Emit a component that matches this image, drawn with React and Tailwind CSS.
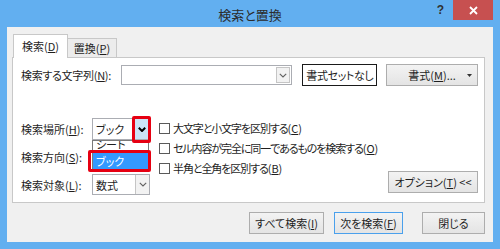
import React from "react";

const U = ({ c }) => <span className="underline underline-offset-[1px] decoration-[1px]">{c}</span>;

const Chevron = ({ bold }) => (
  <svg width="8" height="5" viewBox="0 0 8 5">
    <path
      d="M0.8 0.8 L4 4 L7.2 0.8"
      fill="none"
      stroke={bold ? "#000" : "#606060"}
      strokeWidth={bold ? 2 : 1.1}
    />
  </svg>
);

const Btn = ({ w, children, primary }) => (
  <div
    className={`h-[22px] flex items-center justify-center whitespace-nowrap border bg-linear-to-b from-[#f3f3f3] to-[#e4e4e4] ${
      primary ? "border-[#4aa0ec]" : "border-[#adadad]"
    } ${w}`}
  >
    {children}
  </div>
);

export default function App() {
  return (
    <div className="w-[500px] h-[249px] bg-[#62aff0] flex flex-col font-['Noto_Sans_CJK_JP',sans-serif] [font-feature-settings:'palt'] text-[11px] leading-[14px] text-[#1e1e1e] overflow-hidden">
      {/* title bar */}
      <div className="h-[27px] shrink-0 grid grid-cols-[1fr_auto_1fr]">
        <div />
        <div className="pt-[6px] text-[13px] leading-[17px] text-[#2b2b2b]">検索と置換</div>
        <div className="flex justify-end items-start pr-[7px]">
          <div className="mt-[3px] mr-[9px] text-[12px] leading-[14px] font-bold text-[#303030] font-['Liberation_Sans',sans-serif]">?</div>
          <div className="w-[40px] h-[20px] bg-[#c75050] flex items-center justify-center">
            <svg width="9" height="9" viewBox="0 0 9 9">
              <path d="M1 1 L8 8 M8 1 L1 8" stroke="#fff" strokeWidth="1.8" />
            </svg>
          </div>
        </div>
      </div>

      {/* body */}
      <div className="mx-[7px] mb-[7px] flex-1 bg-[#f0f0f0] flex flex-col pt-[7px] pl-[5px]">
        {/* tabs */}
        <div className="flex items-end h-[24px] ml-[1px] relative z-10">
          <div className="w-[55px] h-[24px] bg-white border border-b-0 border-[#c8c8c8] flex items-center justify-center pb-[1px]">
            検索(<U c="D" />)
          </div>
          <div className="w-[49px] h-[19px] mb-[1px] bg-[#ececec] border border-l-0 border-b-0 border-[#c8c8c8] flex items-center justify-center">
            置換(<U c="P" />)
          </div>
        </div>

        {/* panel */}
        <div className="w-[473px] h-[146px] -mt-[1px] border border-[#c8c8c8] bg-white flex flex-col pt-[6px] pl-[8px] pr-[6px]">
          {/* row 1 */}
          <div className="flex items-center h-[22px] whitespace-nowrap">
            <div className="w-[100px] tracking-[-0.3px]">
              検索する文字列(<U c="N" />):
            </div>
            <div className="w-[172px] h-[20px] border border-[#abadb3] bg-white flex justify-end">
              <div className="w-[14px] m-[1px] border border-[#c5c5c5] bg-[#f2f2f2] flex items-center justify-center">
                <Chevron />
              </div>
            </div>
            <div className="ml-[10px] w-[75px] h-[22px] border border-[#1a1a1a] bg-white flex items-center justify-center tracking-[-0.4px]">
              書式セットなし
            </div>
            <div className="ml-[9px] w-[92px] h-[22px] border border-[#adadad] bg-linear-to-b from-[#f3f3f3] to-[#e4e4e4] flex items-center justify-center relative">
              <span>
                書式(<U c="M" />)...
              </span>
              <svg className="absolute right-[5px] top-[9px]" width="5" height="3" viewBox="0 0 5 3">
                <path d="M0 0 L5 0 L2.5 3 Z" fill="#333" />
              </svg>
            </div>
          </div>

          {/* lower section */}
          <div className="mt-[32px] flex h-[76px] whitespace-nowrap">
            <div className="shrink-0 grid grid-cols-[71px_58px] auto-rows-[22px] gap-y-[6px]">
              <div className="flex items-center">
                検索場所(<U c="H" />):
              </div>
              <div className="relative">
                <div className="h-[22px] border border-[#abadb3] bg-white flex items-center">
                  <span className="pl-[3px] flex-1">ブック</span>
                  <div className="w-[15px] h-full bg-[#cce4f7] border-l border-[#7eb4ea] flex items-center justify-center">
                    <Chevron bold />
                  </div>
                </div>
                {/* dropdown list */}
                <div className="absolute left-0 top-[22px] w-[57px] h-[30px] border border-[#7a7a7a] bg-white overflow-hidden z-10">
                  <div className="-mt-[4px] h-[16px] leading-[15px] pl-[3px]">シート</div>
                  <div className="h-[16px] bg-[#3399ff] text-white flex items-center pl-[3px]">ブック</div>
                </div>
                {/* red highlights */}
                <div className="absolute left-[40px] -top-[2px] w-[19px] h-[27px] border-[3px] border-[#e60012] rounded-[2px] z-20" />
                <div className="absolute -left-[4px] top-[32px] w-[63px] h-[22px] border-[3px] border-[#e60012] rounded-[2px] z-20" />
              </div>

              <div className="flex items-center">
                検索方向(<U c="S" />):
              </div>
              <div />

              <div className="flex items-center">
                検索対象(<U c="L" />):
              </div>
              <div className="h-[21px] border border-[#abadb3] bg-white flex items-center">
                <span className="pl-[3px] flex-1">数式</span>
                <div className="w-[14px] h-full bg-[#f2f2f2] border-l border-[#c5c5c5] flex items-center justify-center">
                  <Chevron />
                </div>
              </div>
            </div>

            {/* checkboxes */}
            <div className="ml-[9px] flex-1 min-w-0 flex flex-col">
              {[
                ["大文字と小文字を区別する", "C"],
                ["セル内容が完全に同一であるものを検索する", "O"],
                ["半角と全角を区別する", "B"],
              ].map(([t, k]) => (
                <div key={k} className="h-[20px] flex items-center">
                  <div className="w-[11px] h-[11px] shrink-0 border border-[#5a5a5a] bg-white" />
                  <span className="ml-[3px]">
                    <span className="tracking-[-1.1px]">{t}</span>(<U c={k} />)
                  </span>
                </div>
              ))}
            </div>

            <div className="shrink-0 self-end mb-[1px]">
              <Btn w="w-[90px]">
                オプション(<U c="T" />)&nbsp;&lt;&lt;
              </Btn>
            </div>
          </div>
        </div>

        {/* bottom buttons */}
        <div className="mt-[9px] flex justify-end pr-[8px]">
          <Btn w="w-[75px]">
            すべて検索(<U c="I" />)
          </Btn>
          <div className="ml-[10px]">
            <Btn w="w-[69px]" primary>
              次を検索(<U c="F" />)
            </Btn>
          </div>
          <div className="ml-[19px]">
            <Btn w="w-[63px]">閉じる</Btn>
          </div>
        </div>
      </div>
    </div>
  );
}
